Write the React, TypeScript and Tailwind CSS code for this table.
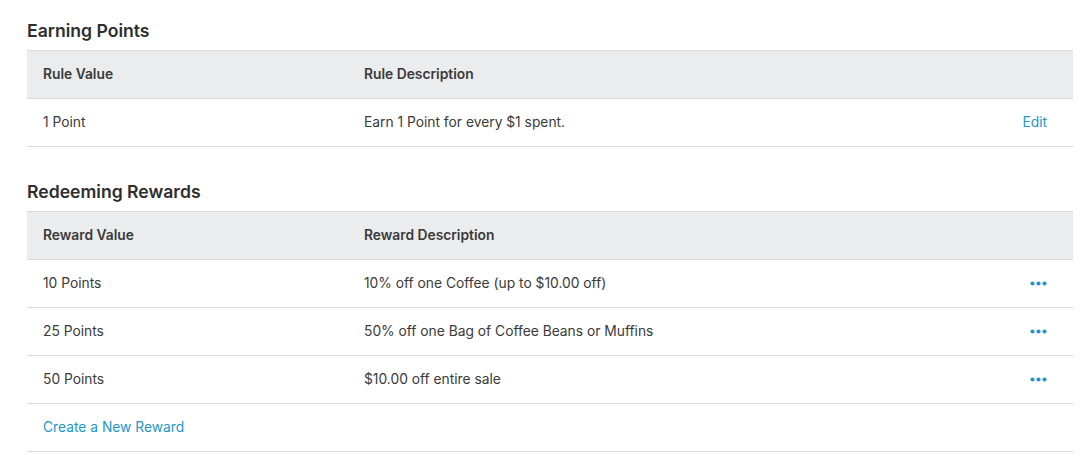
const FONT = { fontFamily: 'Inter, "Open Sans", "Liberation Sans", sans-serif' };

const rewards = [
  { value: "10 Points", desc: "10% off one Coffee (up to $10.00 off)" },
  { value: "25 Points", desc: "50% off one Bag of Coffee Beans or Muffins" },
  { value: "50 Points", desc: "$10.00 off entire sale" },
];

function Dots() {
  return (
    <svg width="17" height="5" viewBox="0 0 17 5" className="text-[#2396c9]">
      <circle cx="2.5" cy="2.5" r="2.1" fill="currentColor" />
      <circle cx="8.5" cy="2.5" r="2.1" fill="currentColor" />
      <circle cx="14.5" cy="2.5" r="2.1" fill="currentColor" />
    </svg>
  );
}

function HeaderRow({ left, right }: { left: string; right: string }) {
  return (
    <div className="flex h-[49px] items-center border-y border-[#dadada] bg-[#ebeced] text-[13.8px] font-semibold text-[#3a3a3a]">
      <div className="w-[337px] pl-4">{left}</div>
      <div>{right}</div>
    </div>
  );
}

function Row({ left, right, action }: { left: string; right: string; action?: React.ReactNode }) {
  return (
    <div className="flex h-[48px] items-center border-b border-[#dadada] text-[13.8px] text-[#3a3a3a]">
      <div className="w-[337px] pl-4">{left}</div>
      <div className="flex-1">{right}</div>
      {action ? <div className="pr-[26px]">{action}</div> : null}
    </div>
  );
}

export default function App() {
  return (
    <div className="min-h-[460px] bg-white pl-[27px] pr-[14px] pt-[18px]" style={FONT}>
      <h2 className="mb-[7px] h-[25px] text-[17.6px] leading-[25px] font-semibold text-[#2e2e2e]">Earning Points</h2>
      <HeaderRow left="Rule Value" right="Rule Description" />
      <Row
        left="1 Point"
        right="Earn 1 Point for every $1 spent."
        action={<a className="text-[#2396c9]">Edit</a>}
      />

      <h2 className="mt-[32px] mb-[7px] h-[25px] text-[17.6px] leading-[25px] font-semibold text-[#2e2e2e]">Redeeming Rewards</h2>
      <HeaderRow left="Reward Value" right="Reward Description" />
      {rewards.map((r) => (
        <Row key={r.value} left={r.value} right={r.desc} action={<Dots />} />
      ))}
      <div className="flex h-[48px] items-center border-b border-[#dadada] pl-4 text-[13.8px] text-[#2396c9]">
        Create a New Reward
      </div>
    </div>
  );
}
